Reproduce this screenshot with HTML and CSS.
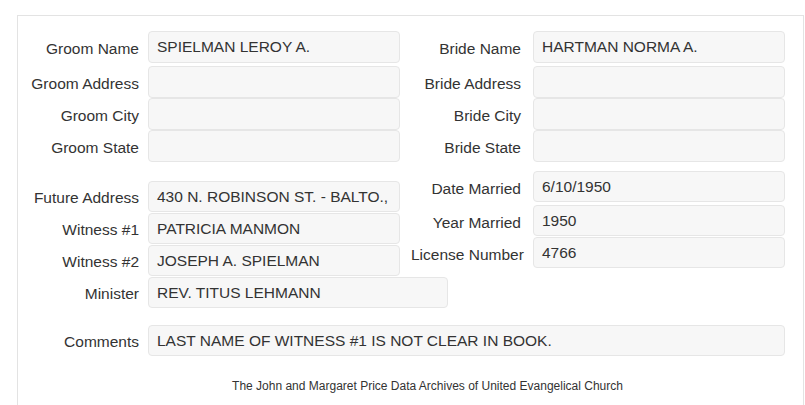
FILE: index.html
```html
<!DOCTYPE html>
<html>
<head>
<meta charset="utf-8">
<title>Marriage Record</title>
<link rel="stylesheet" href="styles.css">
</head>
<body>
<div class="panel">
  <div class="top">
    <div class="col">
      <div class="row first"><span class="lbl">Groom Name</span><div class="field">SPIELMAN LEROY A.</div></div>
      <div class="row"><span class="lbl">Groom Address</span><div class="field"></div></div>
      <div class="row"><span class="lbl">Groom City</span><div class="field"></div></div>
      <div class="row"><span class="lbl">Groom State</span><div class="field"></div></div>
    </div>
    <div class="col right">
      <div class="row first"><span class="lbl">Bride Name</span><div class="field">HARTMAN NORMA A.</div></div>
      <div class="row"><span class="lbl">Bride Address</span><div class="field"></div></div>
      <div class="row"><span class="lbl">Bride City</span><div class="field"></div></div>
      <div class="row"><span class="lbl">Bride State</span><div class="field"></div></div>
    </div>
  </div>
  <div class="lower">
    <div class="col left-low">
      <div class="row"><span class="lbl">Future Address</span><div class="field">430 N. ROBINSON ST. - BALTO.,</div></div>
      <div class="row"><span class="lbl">Witness #1</span><div class="field">PATRICIA MANMON</div></div>
      <div class="row"><span class="lbl">Witness #2</span><div class="field">JOSEPH A. SPIELMAN</div></div>
      <div class="row"><span class="lbl">Minister</span><div class="field wide">REV. TITUS LEHMANN</div></div>
    </div>
    <div class="col right right-low">
      <div class="row"><span class="lbl">Date Married</span><div class="field">6/10/1950</div></div>
      <div class="row r2"><span class="lbl">Year Married</span><div class="field">1950</div></div>
      <div class="row"><span class="lbl">License Number</span><div class="field">4766</div></div>
    </div>
  </div>
  <div class="row comments"><span class="lbl">Comments</span><div class="field full">LAST NAME OF WITNESS #1 IS NOT CLEAR IN BOOK.</div></div>
  <p class="footer">The John and Margaret Price Data Archives of United Evangelical Church</p>
</div>
</body>
</html>
```
FILE: styles.css
```css
html, body {
  margin: 0;
  padding: 0;
  overflow: hidden;
  background: #fff;
}
body {
  font-family: "Liberation Sans", Arial, sans-serif;
  font-size: 15.5px;
  color: #333;
}
.panel {
  margin: 15px 0 0 17px;
  width: 785px;
  height: 420px;
  border: 1px solid #e3e3e3;
  border-bottom: none;
  padding-top: 15px;
}
.top, .lower {
  display: grid;
  grid-template-columns: 382px 385px;
}
.col {
  display: flex;
  flex-direction: column;
  min-width: 0;
}
.row {
  display: flex;
  align-items: center;
  height: 32px;
}
.row.first {
  margin-bottom: 3px;
}
.lbl {
  flex: 0 0 auto;
  width: 121px;
  margin-right: 9px;
  text-align: right;
  padding-top: 4px;
  white-space: nowrap;
}
.right .lbl {
  width: 110px;
  padding-left: 11px;
  margin-right: 12px;
}
.field {
  flex: 0 0 auto;
  box-sizing: border-box;
  width: 252px;
  height: 100%;
  border: 1px solid #e6e6e6;
  border-radius: 4px;
  background: #f7f7f7;
  padding: 0 8px;
  display: flex;
  align-items: center;
  white-space: nowrap;
  overflow: hidden;
}
.field.wide { width: 300px; }
.field.full { width: 637px; }
.left-low { padding-top: 19px; }
.left-low .row { height: 31px; margin-top: 1px; }
.left-low .row:first-child { margin-top: 0; }
.left-low .lbl { padding-top: 3px; }
.right-low { padding-top: 9px; }
.right-low .row { height: 31px; margin-top: 1px; }
.right-low .row:first-child { margin-top: 0; }
.right-low .row.r2 { margin-top: 3px; }
.comments {
  margin-top: 17px;
  height: 31px;
}
.comments .lbl { padding-top: 3px; }
.footer {
  margin: 23px 0 0;
  padding-left: 34px;
  text-align: center;
  font-size: 12px;
  line-height: 14px;
}
```
